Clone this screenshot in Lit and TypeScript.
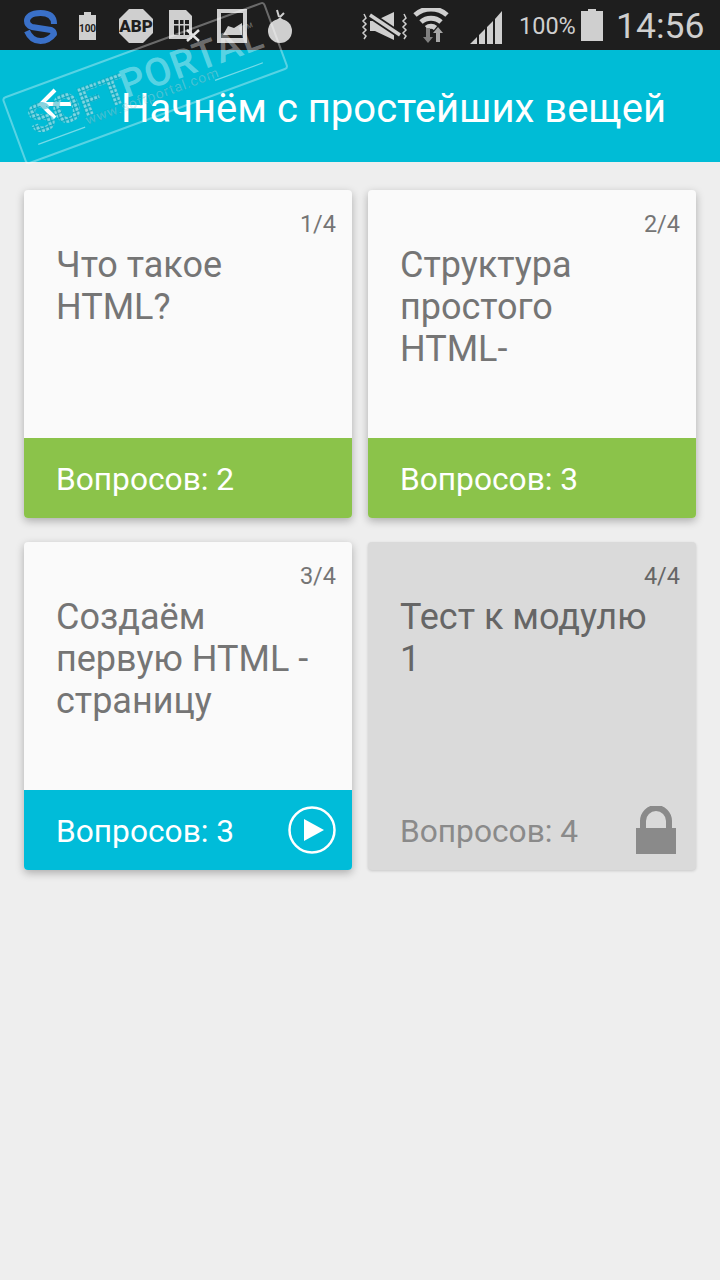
import { LitElement, html, css, svg } from 'lit';
import { customElement } from 'lit/decorators.js';

type Lesson = {
  index: string;
  title: string;
  questions: number;
  state: 'done' | 'current' | 'locked';
};

const LESSONS: Lesson[] = [
  { index: '1/4', title: 'Что такое HTML?', questions: 2, state: 'done' },
  { index: '2/4', title: 'Структура простого HTML-', questions: 3, state: 'done' },
  { index: '3/4', title: 'Создаём первую HTML - страницу', questions: 3, state: 'current' },
  { index: '4/4', title: 'Тест к модулю 1', questions: 4, state: 'locked' },
];

// status bar glyphs, each one placed by its own left/top
const leftIcons = html`
  <svg class="ic" style="left:24px;top:10px" width="33" height="34" viewBox="0 0 33 34">
    <path d="M30 14C30 7 26 3 16.500 3S3 7 3 11c0 3 2 5 5 6l19 3c2 1 3 2 3 4-3 4-8 7-13.500 7C11 31 6 28 3 21"
      fill="none" stroke="#3a70c8" stroke-width="6" stroke-linejoin="round"/>
  </svg>
  <svg class="ic" style="left:79px;top:12px" width="17" height="28" viewBox="0 0 17 28">
    <path d="M5 0h7v3h5v25H0V3h5z" fill="#cfcfcf"/>
    <text x="8.500" y="19.500" text-anchor="middle" class="tiny">100</text>
  </svg>
  <svg class="ic" style="left:119px;top:9px" width="34" height="34" viewBox="0 0 34 34">
    <path d="M10 0h14l10 10v14L24 34H10L0 24V10z" fill="#cfcfcf"/>
    <text x="17" y="23" text-anchor="middle" class="abp">ABP</text>
  </svg>
  <svg class="ic" style="left:169px;top:10px" width="32" height="32" viewBox="0 0 32 32">
    <path d="M0 0h17l6 6v23H0z" fill="#cfcfcf"/>
    <path d="M5 10h15v15H5z" fill="#1e1e1e"/>
    <path d="M5 14h15v1.500H5zM9.500 10H11v15H9.500zM14.500 10H16v15h-1.500z" fill="#cfcfcf"/>
    <path d="M18 20 30 31M30 20 18 31" stroke="#e4e4e4" stroke-width="2.500"/>
  </svg>
  <svg class="ic" style="left:217px;top:9px" width="30" height="34" viewBox="0 0 30 34">
    <path d="M0 0h30v34H0zM4 4v25h22V4z" fill="#cfcfcf" fill-rule="evenodd"/>
    <path d="M6 26l5-9 6 2 8-5v12z" fill="#cfcfcf"/>
  </svg>
  <svg class="ic" style="left:268px;top:9px" width="24" height="34" viewBox="0 0 24 34">
    <circle cx="12" cy="22" r="12" fill="#cfcfcf"/>
    <path d="M12 8 8 12h8z" fill="#cfcfcf"/>
    <path d="M11 8 9 1M12 8l4-4" stroke="#cfcfcf" stroke-width="2"/>
  </svg>
`;

const rightIcons = html`
  <svg class="ic" style="left:361px;top:10px" width="47" height="32" viewBox="0 0 47 32">
    <path d="M9 11h5L33 2v28l-19-9H9z" fill="#cfcfcf"/>
    <path d="M9 5 39 25" stroke="#1e1e1e" stroke-width="7"/>
    <path d="M9 5 39 25" stroke="#cfcfcf" stroke-width="3.500"/>
    <path d="M3 4 5 8 2 11l3 3-3 3 3 3-3 3 3 3-2 3M43 4l2 4-3 3 3 3-3 3 3 3-3 3 3 3-2 3" fill="none" stroke="#cfcfcf" stroke-width="1.500"/>
  </svg>
  <svg class="ic" style="left:413px;top:8px" width="36" height="36" viewBox="0 0 36 36">
    <g fill="none" stroke="#cfcfcf" stroke-width="5">
      <path d="M2 7A24 24 0 0 1 34 7"/>
      <path d="M8 14A15 15 0 0 1 28 14"/>
      <path d="M13.500 20A7 7 0 0 1 22.500 20"/>
    </g>
    <path d="M13 20h4v9h3l-5 6-5-6h3z" fill="#808080"/>
    <path d="M23 34h4v-9h3l-5-6-5 6h3z" fill="#a6a6a6"/>
  </svg>
  <svg class="ic" style="left:470px;top:11px" width="32" height="33" viewBox="0 0 32 33">
    <path d="M0 33 7 26v7zM9 24l6-6v15H9zM17 16l6-6v23h-6zM25 8l7-8v33h-7z" fill="#cfcfcf"/>
  </svg>
  <svg class="ic" style="left:581px;top:9px" width="22" height="32" viewBox="0 0 22 32">
    <path d="M7 0h8v2h7v30H0V2h7z" fill="#cfcfcf"/>
  </svg>
`;

const watermark = svg`
  <defs>
    <pattern id="dots" width="4.300" height="4.300" patternUnits="userSpaceOnUse">
      <rect width="4.300" height="4.300" fill="#0f96aa" fill-opacity="0.45"/>
      <rect x="0.400" y="0.400" width="3" height="3" fill="#7fd6e2"/>
    </pattern>
  </defs>
  <g transform="translate(2 98) rotate(-20.200)">
    <rect x="0.500" y="0.500" width="278" height="70" rx="3" fill="none" stroke="#fff" stroke-opacity="0.34" stroke-width="2"/>
    <text x="17" y="46" class="wm-soft" fill="url(#dots)">SOFT</text>
    <text x="116" y="43" class="wm-portal">PORTAL</text>
    <text x="250" y="20" class="wm-tm">TM</text>
    <text x="71" y="55" class="wm-url">www.softportal.com</text>
    <path d="M18 56H68M206 57H257" stroke="#d5f4f8" stroke-opacity="0.55" stroke-width="1.200"/>
  </g>
`;

@customElement('app-root')
export class AppRoot extends LitElement {
  static styles = css`
    :host {
      display: block;
      position: relative;
      height: 1280px;
      overflow: hidden;
      background: #eeeeee;
      font-family: 'Roboto', 'Liberation Sans', sans-serif;
    }

    .status {
      position: relative;
      height: 50px;
      background: #1e1e1e;
    }

    .ic {
      position: absolute;
    }

    .tiny {
      font: 700 10px 'Roboto', sans-serif;
      fill: #1e1e1e;
    }

    .abp {
      font: 900 17px 'Roboto', sans-serif;
      fill: #1e1e1e;
    }

    .battery,
    .clock {
      position: absolute;
      top: 0;
      line-height: 52px;
      color: #cfcfcf;
    }

    .battery {
      left: 519px;
      font-size: 23.500px;
    }

    .clock {
      left: 616px;
      font-size: 35.500px;
    }

    .toolbar {
      display: flex;
      align-items: center;
      height: 112px;
      background: #00bcd6;
      color: #fff;
      padding-left: 38px;
      gap: 49px;
    }

    .arrow {
      flex: none;
      margin-bottom: 4px;
    }

    .toolbar h1 {
      margin: 0;
      padding-top: 4px;
      font-size: 40px;
      font-weight: 400;
      white-space: nowrap;
    }

    .grid {
      display: grid;
      grid-template-columns: 328px 328px;
      grid-auto-rows: 328px;
      column-gap: 16px;
      row-gap: 24px;
      padding: 28px 24px;
    }

    .card {
      display: flex;
      flex-direction: column;
      border-radius: 4px;
      overflow: hidden;
      background: #fafafa;
      box-shadow: 0 3px 8px rgba(0, 0, 0, 0.28);
    }

    .card.locked {
      background: #dadada;
      box-shadow: 0 1px 3px rgba(0, 0, 0, 0.16);
    }

    .body {
      flex: 1;
      min-height: 0;
      padding: 18px 16px 0 32px;
      color: #757575;
    }

    .count {
      text-align: right;
      font-size: 23.500px;
      line-height: 32px;
    }

    .title {
      max-width: 256px;
      margin-top: 4px;
      font-size: 36px;
      line-height: 42px;
    }

    .locked .body {
      color: #666;
    }

    .foot {
      display: flex;
      align-items: center;
      justify-content: space-between;
      height: 80px;
      padding: 0 16px 0 32px;
      color: #fff;
    }

    .foot span {
      padding-top: 2px;
      font-size: 31.700px;
    }

    .done .foot {
      background: #8bc34a;
    }

    .current .foot {
      background: #00bcd9;
    }

    .locked .foot {
      color: #8a8a8a;
      padding-right: 20px;
    }

    .watermark {
      position: absolute;
      left: 0;
      top: 0;
      pointer-events: none;
    }

    .wm-soft {
      font: 900 41px 'Roboto', sans-serif;
    }

    .wm-portal {
      font: 500 39px 'Roboto', sans-serif;
      letter-spacing: 1px;
      fill: #fff;
      fill-opacity: 0.37;
    }

    .wm-tm {
      font: 400 7px 'Roboto', sans-serif;
      fill: #fff;
      fill-opacity: 0.4;
    }

    .wm-url {
      font: 400 14px 'Roboto', sans-serif;
      letter-spacing: 0.800px;
      fill: #fff;
      fill-opacity: 0.3;
      stroke: #057f92;
      stroke-opacity: 0.35;
      stroke-width: 0.400;
    }
  `;

  private footIcon(state: Lesson['state']) {
    if (state === 'current') {
      return html`<svg width="48" height="48" viewBox="0 0 48 48">
        <circle cx="24" cy="24" r="22.500" fill="none" stroke="#fff" stroke-width="2.500"/>
        <path d="M16 13 36 24 16 35z" fill="#fff"/>
      </svg>`;
    }
    if (state === 'locked') {
      return html`<svg width="40" height="48" viewBox="0 0 40 48">
        <path d="M7 22V15a13 13 0 0 1 26 0v7" fill="none" stroke="#8a8a8a" stroke-width="6"/>
        <path d="M0 22h40v26H0z" fill="#8a8a8a"/>
      </svg>`;
    }
    return '';
  }

  render() {
    return html`
      <div class="status">
        ${leftIcons} ${rightIcons}
        <span class="battery">100%</span>
        <span class="clock">14:56</span>
      </div>
      <header class="toolbar">
        <svg class="arrow" width="34" height="34" viewBox="0 0 34 34">
          <path d="M33 17H3M17 3 3 17l14 14" fill="none" stroke="#fff" stroke-width="4"/>
        </svg>
        <h1>Начнём с простейших вещей</h1>
      </header>
      <main class="grid">
        ${LESSONS.map(
          (l) => html`
            <section class="card ${l.state}">
              <div class="body">
                <div class="count">${l.index}</div>
                <div class="title">${l.title}</div>
              </div>
              <div class="foot">
                <span>Вопросов: ${l.questions}</span>
                ${this.footIcon(l.state)}
              </div>
            </section>
          `,
        )}
      </main>
      <svg class="watermark" width="300" height="170" viewBox="0 0 300 170">${watermark}</svg>
    `;
  }
}
